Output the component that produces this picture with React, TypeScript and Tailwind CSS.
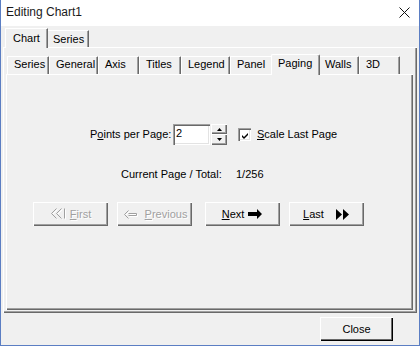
import React from "react";

const raised =
  "bg-[#f0f0f0] shadow-[inset_1px_1px_0_#ffffff,inset_-1px_-1px_0_#696969,inset_-2px_-2px_0_#a0a0a0]";
const sunken =
  "bg-white shadow-[inset_1px_1px_0_#a0a0a0,inset_2px_2px_0_#696969,inset_-1px_-1px_0_#ffffff,inset_-2px_-2px_0_#e3e3e3]";

function Tab({ label, width, selected }: { label: string; width: number; selected?: boolean }) {
  return (
    <div
      style={{ width }}
      className={
        "relative flex items-start pl-[6px] border-l border-t border-white border-r border-r-[#696969] shadow-[inset_-1px_0_0_#a0a0a0] bg-[#f0f0f0] " +
        (selected ? "z-10 h-[21px] -mb-px -mx-[2px] pt-[2px] rounded-t-[2px]" : "h-[18px] pt-[1px] rounded-t-[1px]")
      }
    >
      {label}
    </div>
  );
}

function DisabledLabel({ u, rest }: { u: string; rest: string }) {
  return (
    <span className="text-[#a0a0a0] [text-shadow:1px_1px_0_#ffffff]">
      <u className="underline-offset-[1px]">{u}</u>
      {rest}
    </span>
  );
}

function NavButton({ children, className }: { children: React.ReactNode; className?: string }) {
  return (
    <div className={"w-[75px] h-[24px] flex items-center justify-center " + raised + " " + (className || "")}>
      {children}
    </div>
  );
}

export default function App() {
  const innerTabs: [string, number][] = [
    ["Series", 42],
    ["General", 49],
    ["Axis", 41],
    ["Titles", 42],
    ["Legend", 49],
    ["Panel", 43],
  ];
  const innerTabs2: [string, number][] = [
    ["Walls", 41],
    ["3D", 41],
  ];

  return (
    <div className="w-[420px] h-[346px] bg-[#f0f0f0] flex flex-col border-x border-b border-[#5b7ec3] font-['Liberation_Sans',Arial,sans-serif] text-[11px] leading-[13px] text-black overflow-hidden">
      {/* title bar */}
      <div className="h-[26px] shrink-0 bg-white flex items-center justify-between pl-[5px] pr-[9px]">
        <span className="text-[12px] text-[#1a1a1a] -mt-[1px]">Editing Chart1</span>
        <svg width="11" height="11" viewBox="0 0 11 11" className="-mt-[1px]">
          <path d="M0.5 0.5 L10.5 10.5 M10.5 0.5 L0.5 10.5" stroke="#111" strokeWidth="1" />
        </svg>
      </div>

      <div className="px-[2px] pt-[1px]">
        {/* outer tabs */}
        <div className="flex items-end h-[20px] pl-[2px]">
          <div className="relative z-10 h-[20px] w-[43px] -mb-px pl-[7px] pt-[3px] border-l border-t border-white border-r border-r-[#696969] shadow-[inset_-1px_0_0_#a0a0a0] bg-[#f0f0f0]">
            Chart
          </div>
          <div className="h-[17px] w-[41px] pl-[5px] pt-[2px] border-t border-white border-r border-r-[#696969] shadow-[inset_-1px_0_0_#a0a0a0]">
            Series
          </div>
        </div>

        {/* outer panel */}
        <div className="h-[266px] w-[414px] pl-[3px] pr-[4px] pt-[6px] shadow-[inset_1px_1px_0_#ffffff,inset_-1px_-1px_0_#696969,inset_-2px_-2px_0_#a0a0a0]">
          {/* inner tabs */}
          <div className="flex items-end h-[21px] pl-[1px]">
            {innerTabs.map(([l, w]) => (
              <Tab key={l} label={l} width={w} />
            ))}
            <Tab label="Paging" width={49} selected />
            {innerTabs2.map(([l, w]) => (
              <Tab key={l} label={l} width={w} />
            ))}
          </div>

          {/* inner panel */}
          <div className="h-[236px] w-[407px] shadow-[inset_1px_1px_0_#ffffff,inset_-1px_-1px_0_#696969,inset_-2px_-2px_0_#a0a0a0]">
            <div className="pt-[50px]">
              <div className="flex items-center h-[21px] pl-[84px]">
                <span className="w-[83px]">
                  P<u className="underline-offset-[1px]">o</u>ints per Page:
                </span>
                <div className={"w-[37px] h-[21px] pl-[3px] pt-[3px] " + sunken}>2</div>
                <div className="ml-[1px] flex flex-col w-[16px] h-[21px]">
                  <div className={"h-[10px] flex items-center justify-center " + raised}>
                    <svg width="5" height="3" viewBox="0 0 5 3">
                      <path d="M2.5 0 L5 3 L0 3 Z" fill="#000" />
                    </svg>
                  </div>
                  <div className={"h-[11px] flex items-center justify-center " + raised}>
                    <svg width="5" height="3" viewBox="0 0 5 3">
                      <path d="M0 0 L5 0 L2.5 3 Z" fill="#000" />
                    </svg>
                  </div>
                </div>
                <div className={"ml-[11px] w-[13px] h-[13px] flex items-center justify-center " + sunken}>
                  <svg width="9" height="9" viewBox="0 0 9 9" className="ml-[1px] mt-[1px]">
                    <path d="M1 4 L3 6 L7 2 L7 4 L3 8 L1 6 Z" fill="#000" />
                  </svg>
                </div>
                <span className="ml-[6px]">
                  <u className="underline-offset-[1px]">S</u>cale Last Page
                </span>
              </div>

              <div className="flex mt-[23px] pl-[115px]">
                <span className="w-[115px]">Current Page / Total:</span>
                <span>1/256</span>
              </div>

              <div className="flex mt-[21px] pl-[27px]">
                <NavButton>
                  <svg width="17" height="12" viewBox="0 0 17 12" className="mr-[3px]">
                    <g fill="none" strokeWidth="1">
                      <path d="M7.5 1.5 L2.5 6.5 L7.5 11.5 M12.5 1.5 L7.5 6.5 L12.5 11.5 M15.5 1.5 L15.5 11.5" stroke="#ffffff" />
                      <path d="M6.5 0.5 L1.5 5.5 L6.5 10.5 M11.5 0.5 L6.5 5.5 L11.5 10.5 M14.5 0.5 L14.5 10.5" stroke="#a0a0a0" />
                    </g>
                  </svg>
                  <DisabledLabel u="F" rest="irst" />
                </NavButton>
                <NavButton className="ml-[9px]">
                  <svg width="19" height="12" viewBox="0 0 19 12" className="mr-[4px]">
                    <g fill="none" strokeWidth="1">
                      <path d="M7.5 3.5 L3.5 7.5 L7.5 11.5 M7.5 6.5 L15.5 6.5 L15.5 8.5 L7.5 8.5" stroke="#ffffff" />
                      <path d="M6.5 2.5 L2.5 6.5 L6.5 10.5 M6.5 5.5 L14.5 5.5 L14.5 7.5 L6.5 7.5" stroke="#a0a0a0" />
                    </g>
                  </svg>
                  <DisabledLabel u="P" rest="revious" />
                </NavButton>
                <NavButton className="ml-[13px]">
                  <span>
                    <u className="underline-offset-[1px]">N</u>ext
                  </span>
                  <svg width="15" height="10" viewBox="0 0 15 10" className="ml-[4px]">
                    <path d="M0 3 L9 3 L9 0 L14 5 L9 10 L9 7 L0 7 Z" fill="#000" />
                  </svg>
                </NavButton>
                <NavButton className="ml-[9px]">
                  <span>
                    <u className="underline-offset-[1px]">L</u>ast
                  </span>
                  <svg width="14" height="11" viewBox="0 0 14 11" className="ml-[12px]">
                    <path d="M0 0 L6 5.5 L0 11 Z M7 0 L13 5.5 L7 11 Z" fill="#000" />
                  </svg>
                </NavButton>
              </div>
            </div>
          </div>
        </div>
      </div>

      {/* close */}
      <div className="flex justify-end pr-[26px] mt-[4px]">
        <div className="w-[73px] h-[24px] flex items-center justify-center bg-[#f0f0f0] shadow-[inset_1px_1px_0_#ffffff,inset_-1px_-1px_0_#000000,inset_-2px_-2px_0_#696969]">
          Close
        </div>
      </div>
    </div>
  );
}
